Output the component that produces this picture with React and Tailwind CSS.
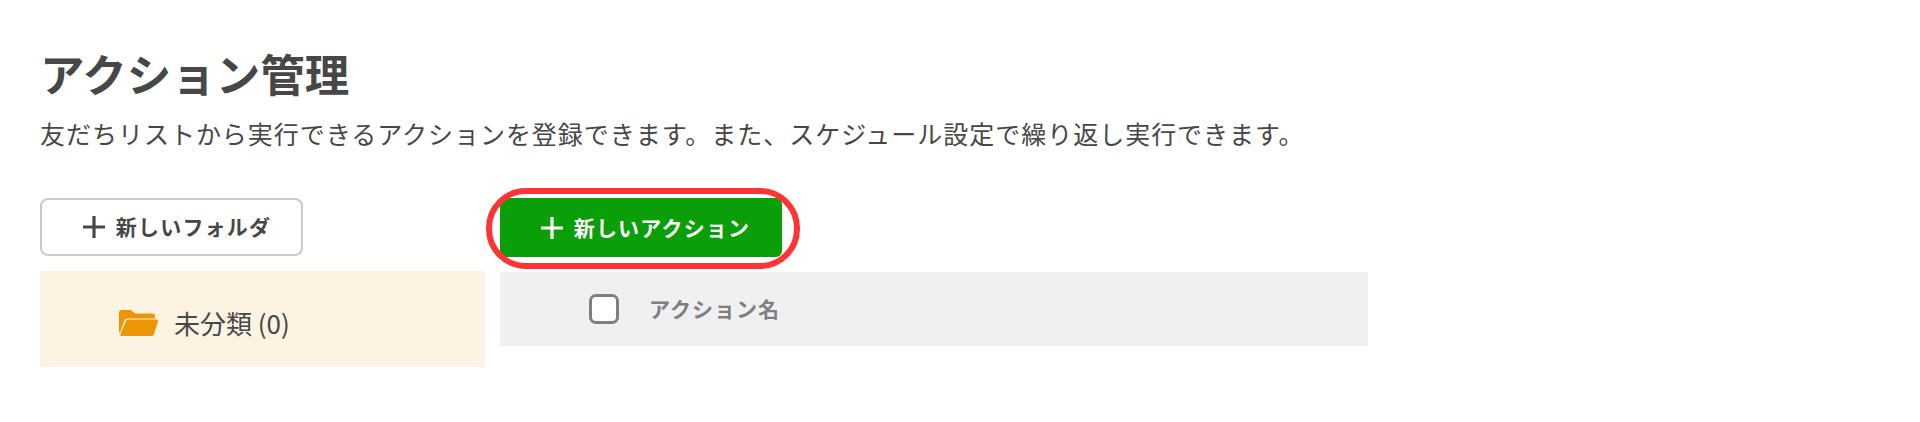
const FolderIcon = () => (
  <svg viewBox="0 0 39 26" className="w-[39px] h-[26px] shrink-0">
    <path d="M0 2.5A2.5 2.5 0 0 1 2.5 0h9.5l4 3.5h17.5A2.5 2.5 0 0 1 36 6v2.5H8.5A3.5 3.5 0 0 0 5.2 10.8L1.2 22.5H0Z" fill="#ec9505" />
    <path d="M9.5 9.5H37.5A1.2 1.2 0 0 1 39 11L35 24A2.8 2.8 0 0 1 32.4 26H2.2A1.3 1.3 0 0 1 1.4 24.3L6.8 11.5A3 3 0 0 1 9.5 9.5Z" fill="#ec9505" />
  </svg>
);

const PlusIcon = () => (
  <svg viewBox="0 0 22 22" className="w-[22px] h-[22px] shrink-0" fill="none" stroke="currentColor" strokeWidth="3.2">
    <path d="M11 0V22M0 11H22" />
  </svg>
);

const App = () => {
  return (
    <div className="min-h-[422px] bg-white pl-10 pt-[49px] text-[#474747] font-['Noto_Sans_CJK_JP','Noto_Sans',sans-serif]">
      <h1 className="text-[44.5px] leading-[48px] font-bold">アクション管理</h1>
      <p className="mt-[18px] text-[25px] leading-[36px] tracking-[0.98px] whitespace-nowrap">
        友だちリストから実行できるアクションを登録できます。また、スケジュール設定で繰り返し実行できます。
      </p>

      <div className="mt-[47px] flex gap-[15px]">
        <div className="w-[445px]">
          <button className="w-[263px] h-[58px] flex items-center justify-center gap-[11px] pl-[11px] bg-white border-2 border-[#c9cad0] rounded-[8px] text-[21px] font-bold tracking-[1.2px]">
            <PlusIcon />
            新しいフォルダ
          </button>
          <div className="mt-[15px] h-[96px] bg-[#fcf3e2] flex items-center pl-[79px] pt-[7px] gap-[16px]">
            <FolderIcon />
            <span className="text-[26px]">未分類 (0)</span>
          </div>
        </div>

        <div className="w-[868px]">
          <div className="relative w-[282px]">
            <button className="w-[282px] h-[59px] flex items-center justify-center gap-[11px] pl-[9px] bg-[#0a9e08] rounded-[6px] text-white text-[21px] font-bold tracking-[1.2px]">
              <PlusIcon />
              新しいアクション
            </button>
            <div className="absolute left-[-14px] top-[-10px] w-[314px] h-[81px] border-[6px] border-[#ff3535] rounded-[40px]" />
          </div>
          <div className="mt-[15px] h-[74px] bg-[#f0f0f3] flex items-center pl-[89px] gap-[30px]">
            <span className="w-[30px] h-[30px] bg-white border-[3px] border-[#7f7f7f] rounded-[7px]" />
            <span className="text-[21px] font-bold tracking-[1px] text-[#7f7f7f]">アクション名</span>
          </div>
        </div>
      </div>
    </div>
  );
};

export default App;
